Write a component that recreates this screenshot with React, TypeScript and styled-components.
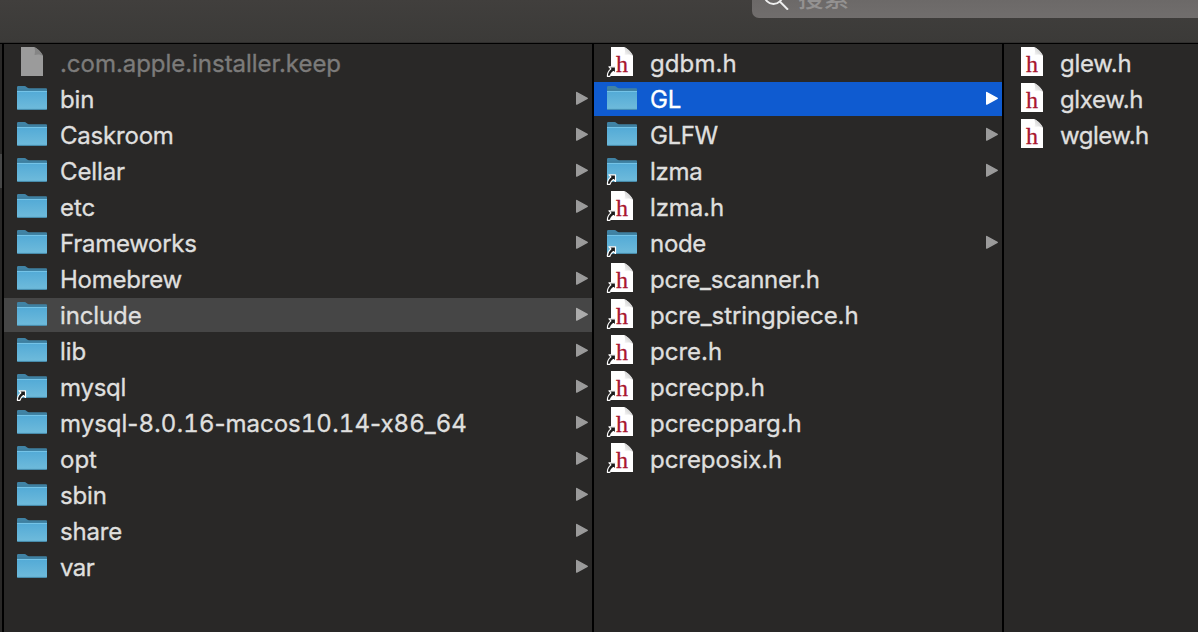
import React from "react";
import styled, { createGlobalStyle } from "styled-components";

const GlobalStyle = createGlobalStyle`
  html, body { margin: 0; padding: 0; background: #292827; }
  body { overflow: hidden; }
`;

const Window = styled.div`
  display: flex;
  flex-direction: column;
  width: 1198px;
  height: 632px;
  overflow: hidden;
  background: #292827;
  font-family: Inter, "Noto Sans CJK SC", sans-serif;
`;

const Toolbar = styled.header`
  display: flex;
  justify-content: flex-end;
  align-items: flex-start;
  box-sizing: border-box;
  flex: none;
  height: 44px;
  background: linear-gradient(#413f3d, #3b3a38 42px, #302f2e 42px);
  border-bottom: 1px solid #000;
`;

const SearchField = styled.div`
  display: flex;
  align-items: flex-end;
  box-sizing: border-box;
  width: 446px;
  height: 18px;
  padding-left: 11px;
  gap: 9px;
  overflow: hidden;
  border-bottom-left-radius: 7px;
  background: linear-gradient(#6c6968, #716e6d);
  color: #949291;
  font: 500 25.500px/37px "Noto Sans CJK SC", sans-serif;

  svg { display: block; flex: none; margin-bottom: 8px; }
  span { flex: none; margin-bottom: 4px; }
`;

const Browser = styled.main`
  display: flex;
  flex: 1;
  min-height: 0;
`;

const PreviousColumn = styled.div`
  box-sizing: border-box;
  flex: none;
  width: 4px;
  padding-top: 110px;
  border-right: 2px solid #000;
`;

const PreviousSelection = styled.div`
  height: 34px;
  background: #464646;
`;

const Column = styled.ul<{ $width: number }>`
  display: flex;
  flex-direction: column;
  gap: 2px;
  box-sizing: border-box;
  flex: none;
  width: ${(p) => p.$width}px;
  margin: 0;
  padding: 2px 0 0;
  list-style: none;
  border-right: 2px solid #000;

  &:last-child { border-right: 0; }
`;

type Tone = "plain" | "path" | "active";
const rowBackground = { plain: "transparent", path: "#464646", active: "#0f5bd0" };

const Row = styled.li<{ $tone: Tone }>`
  display: flex;
  align-items: center;
  box-sizing: border-box;
  flex: none;
  height: 34px;
  padding: 0 4px 0 12px;
  background: ${(p) => rowBackground[p.$tone]};
  color: ${(p) => (p.$tone === "active" ? "#fff" : "#dfdfde")};

  svg { display: block; flex: none; }
`;

const Label = styled.span<{ $dim?: boolean; $spacing: number }>`
  flex: 1;
  margin-left: 12px;
  padding-top: 2px;
  white-space: nowrap;
  font-size: 24px;
  line-height: 34px;
  letter-spacing: ${(p) => p.$spacing}px;
  -webkit-text-stroke: 0.35px currentColor;
  color: ${(p) => (p.$dim ? "#7c7b7a" : "inherit")};
`;

const Digits = styled.span`
  font-variant-numeric: tabular-nums;
`;

const HeaderLetter = styled.text`
  font-family: "Liberation Serif", serif;
  font-size: 24px;
  fill: #a9162f;
  stroke: #a9162f;
  stroke-width: 0.3px;
`;

type Kind = "blank" | "folder" | "header";

function ItemIcon({ kind, alias }: { kind: Kind; alias?: boolean }) {
  return (
    <svg width="32" height="34" viewBox="0 0 32 34">
      <defs>
        <linearGradient id="folderFront" x1="0" y1="0" x2="0" y2="1">
          <stop offset="0" stopColor="#51a9d6" />
          <stop offset="1" stopColor="#6fbbdb" />
        </linearGradient>
        <linearGradient id="fold" x1="0" y1="1" x2="1" y2="0">
          <stop offset="0" stopColor="#fff" />
          <stop offset="1" stopColor="#b8b8b8" />
        </linearGradient>
      </defs>
      {kind === "folder" && (
        <>
          <path d="M1 27V5.200Q1 4 2.200 4H8.500Q9.600 4 10.500 5T12.800 6.300H30Q31 6.300 31 7.300V27Z" fill="#4083a5" />
          <path d="M1 8H31V26.700Q31 27.700 30 27.700H2Q1 27.700 1 26.700Z" fill="url(#folderFront)" />
          <path d="M1 8.400H31" stroke="#356f8d" strokeWidth=".9" />
          <path d="M1 9.400H31" stroke="#78c6e9" strokeWidth="1" />
          <path d="M1.500 27.400H30.500" stroke="#3f86a9" strokeWidth=".8" />
        </>
      )}
      {kind !== "folder" && (
        <>
          <path d="M5 1H18C21 2 26 7 27 10V30H5Z" fill={kind === "blank" ? "#9b9b9b" : "#fff"} />
          <path d="M18 1C19.500 3 19 6 18.500 9C22 8 25 8.500 27 10C25 6 22 2.500 18 1Z" fill={kind === "blank" ? "#858585" : "url(#fold)"} />
        </>
      )}
      {kind === "header" && <HeaderLetter x="10" y="25.7">h</HeaderLetter>}
      {alias && (
        <path
          d="M3 20.800H9.500V27.500L7.400 25.500C5.600 26.800 4.300 28.300 3.900 30.300H1.400C1.200 27.400 2.500 25 4.900 22.900Z"
          fill="#1c1c1c"
          stroke="#fff"
          strokeWidth="1.200"
          strokeLinejoin="round"
        />
      )}
    </svg>
  );
}

function Disclosure({ tone }: { tone: Tone }) {
  const color = tone === "active" ? "#fff" : tone === "path" ? "#acacac" : "#9b9b9b";
  return (
    <svg width="12" height="34" viewBox="0 0 12 34">
      <path d="M.7 10.500L11.200 16.300L.7 22.100Z" fill={color} stroke={color} strokeWidth="1.400" strokeLinejoin="round" />
    </svg>
  );
}

interface Item {
  name: string;
  kind: Kind;
  alias?: boolean;
  tone?: Tone;
  spacing?: number;
}

const folder = (name: string, extra: Partial<Item> = {}): Item => ({ name, kind: "folder", ...extra });
const header = (name: string, extra: Partial<Item> = {}): Item => ({ name, kind: "header", ...extra });

const columns: { width: number; items: Item[] }[] = [
  {
    width: 590,
    items: [
      { name: ".com.apple.installer.keep", kind: "blank", spacing: -0.04 },
      folder("bin"),
      folder("Caskroom", { spacing: -0.2 }),
      folder("Cellar"),
      folder("etc", { spacing: 0 }),
      folder("Frameworks", { spacing: -0.28 }),
      folder("Homebrew", { spacing: -0.22 }),
      folder("include", { tone: "path" }),
      folder("lib"),
      folder("mysql", { alias: true, spacing: -0.25 }),
      folder("mysql-8.0.16-macos10.14-x86_64", { spacing: 0 }),
      folder("opt", { spacing: 0 }),
      folder("sbin"),
      folder("share", { spacing: -0.2 }),
      folder("var", { spacing: -0.5 }),
    ],
  },
  {
    width: 410,
    items: [
      header("gdbm.h", { alias: true, spacing: 0.1 }),
      folder("GL", { tone: "active" }),
      folder("GLFW", { spacing: -0.4 }),
      folder("lzma", { alias: true, spacing: -0.3 }),
      header("lzma.h", { alias: true }),
      folder("node", { alias: true, spacing: -0.3 }),
      header("pcre_scanner.h", { alias: true, spacing: -0.24 }),
      header("pcre_stringpiece.h", { alias: true, spacing: -0.08 }),
      header("pcre.h", { alias: true, spacing: 0 }),
      header("pcrecpp.h", { alias: true, spacing: -0.05 }),
      header("pcrecpparg.h", { alias: true, spacing: -0.05 }),
      header("pcreposix.h", { alias: true, spacing: -0.05 }),
    ],
  },
  {
    width: 194,
    items: [header("glew.h", { spacing: -0.3 }), header("glxew.h", { spacing: -0.35 }), header("wglew.h", { spacing: -0.5 })],
  },
];

export default function App() {
  return (
    <>
      <GlobalStyle />
      <Window>
        <Toolbar>
          <SearchField>
            <svg width="26" height="26" viewBox="0 0 26 26">
              <circle cx="10.500" cy="11" r="9" fill="none" stroke="#eee" strokeWidth="2" />
              <path d="M16.800 17.500L25 25.700" stroke="#eee" strokeWidth="2" />
            </svg>
            <span>搜索</span>
          </SearchField>
        </Toolbar>
        <Browser>
          <PreviousColumn>
            <PreviousSelection />
          </PreviousColumn>
          {columns.map((column) => (
            <Column key={column.width} $width={column.width}>
              {column.items.map((item) => {
                const tone = item.tone ?? "plain";
                return (
                  <Row key={item.name} $tone={tone}>
                    <ItemIcon kind={item.kind} alias={item.alias} />
                    <Label $dim={item.kind === "blank"} $spacing={item.spacing ?? -0.12}>
                      {item.name
                        .split(/(\d+)/)
                        .map((part, i) => (i % 2 ? <Digits key={i}>{part}</Digits> : part))}
                    </Label>
                    {item.kind === "folder" && <Disclosure tone={tone} />}
                  </Row>
                );
              })}
            </Column>
          ))}
        </Browser>
      </Window>
    </>
  );
}
